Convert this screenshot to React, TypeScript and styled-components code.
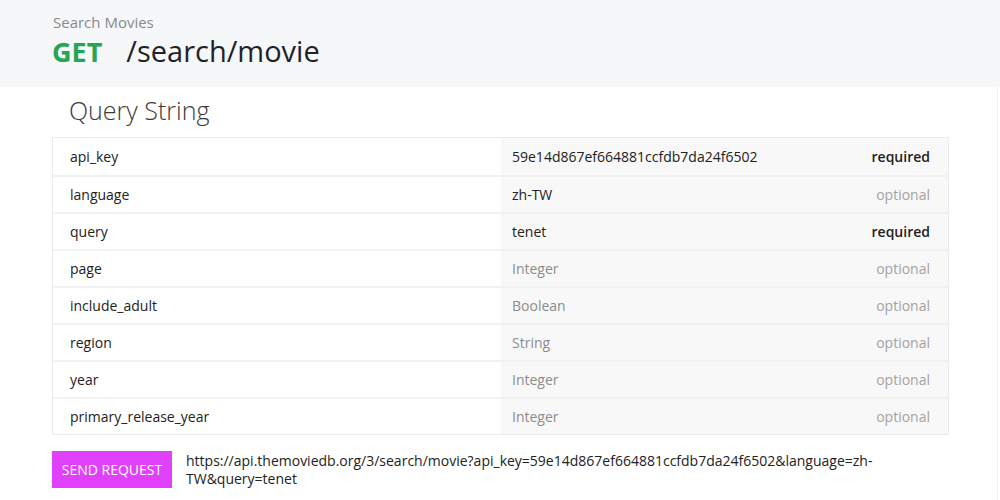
import React from "react";
import styled, { createGlobalStyle } from "styled-components";

const Global = createGlobalStyle`
  html, body { margin: 0; padding: 0; background: #fff; }
  body { font-family: "Open Sans", "Noto Sans", sans-serif; color: #222; }
  * { box-sizing: border-box; }
`;

const Page = styled.div`
  width: 1000px;
  height: 500px;
  overflow: hidden;
  display: flex;
  flex-direction: column;
`;

const Header = styled.header`
  background: #f6f7f9;
  height: 87px;
  padding: 12px 0 0 53px;
  display: flex;
  flex-direction: column;
`;

const Subtitle = styled.div`
  font-size: 15px;
  line-height: 20px;
  color: #8a8a8a;
`;

const Endpoint = styled.div`
  display: flex;
  align-items: baseline;
  gap: 24px;
  margin-top: 0px;
  line-height: 38px;
  margin-left: -1px;
`;

const Method = styled.span`
  font-size: 27px;
  font-weight: 700;
  color: #27a552;
`;

const Path = styled.span`
  font-size: 29px;
  color: #1f2328;
`;

const Body = styled.main`
  flex: 1;
  padding: 0 48px 0 52px;
  border-right: 1px solid #eeeeee;
  margin-right: 2px;
`;

const SectionTitle = styled.h2`
  margin: 0;
  padding: 5px 0 0 17px;
  height: 50px;
  font-size: 25px;
  font-weight: 300;
  line-height: 36px;
  color: #3a3a3a;
`;

const Table = styled.div`
  border: 1px solid #ececec;
  display: flex;
  flex-direction: column;
`;

const Row = styled.div`
  display: grid;
  grid-template-columns: 448px 1fr;
  height: 37px;
  & + & { border-top: 2px solid #f1f1f1; }
`;

const NameCell = styled.div`
  display: flex;
  align-items: center;
  padding-left: 17px;
  font-size: 14px;
  color: #222;
  background: #fff;
`;

const ValueCell = styled.div`
  display: flex;
  align-items: center;
  justify-content: space-between;
  padding: 0 18px 0 11px;
  background: #f8f8f8;
  font-size: 14px;
`;

const Value = styled.span<{ $placeholder?: boolean }>`
  color: ${(p) => (p.$placeholder ? "#8c8c8c" : "#222")};
`;

const Status = styled.span<{ $required?: boolean }>`
  color: ${(p) => (p.$required ? "#222" : "#a3a3a3")};
  font-weight: ${(p) => (p.$required ? 600 : 400)};
`;

const Footer = styled.div`
  display: flex;
  align-items: flex-start;
  gap: 14px;
  margin-top: 16px;
`;

const SendButton = styled.button`
  flex: none;
  width: 120px;
  height: 37px;
  border: none;
  background: #e040fb;
  color: #fff;
  font-family: "Open Sans", sans-serif;
  font-size: 14px;
  text-transform: uppercase;
  padding: 0;
`;

const Url = styled.div`
  flex: 1;
  font-size: 14px;
  line-height: 18px;
  color: #222;
  padding-top: 1px;
`;

type Param = { name: string; value: string; placeholder?: boolean; required?: boolean };

const params: Param[] = [
  { name: "api_key", value: "59e14d867ef664881ccfdb7da24f6502", required: true },
  { name: "language", value: "zh-TW" },
  { name: "query", value: "tenet", required: true },
  { name: "page", value: "Integer", placeholder: true },
  { name: "include_adult", value: "Boolean", placeholder: true },
  { name: "region", value: "String", placeholder: true },
  { name: "year", value: "Integer", placeholder: true },
  { name: "primary_release_year", value: "Integer", placeholder: true },
];

export default function App() {
  return (
    <Page>
      <Global />
      <Header>
        <Subtitle>Search Movies</Subtitle>
        <Endpoint>
          <Method>GET</Method>
          <Path>/search/movie</Path>
        </Endpoint>
      </Header>
      <Body>
        <SectionTitle>Query String</SectionTitle>
        <Table>
          {params.map((p) => (
            <Row key={p.name}>
              <NameCell>{p.name}</NameCell>
              <ValueCell>
                <Value $placeholder={p.placeholder}>{p.value}</Value>
                <Status $required={p.required}>{p.required ? "required" : "optional"}</Status>
              </ValueCell>
            </Row>
          ))}
        </Table>
        <Footer>
          <SendButton>Send Request</SendButton>
          <Url>
            https://api.themoviedb.org/3/search/movie?api_key=59e14d867ef664881ccfdb7da24f6502&amp;language=zh-TW&amp;query=tenet
          </Url>
        </Footer>
      </Body>
    </Page>
  );
}
